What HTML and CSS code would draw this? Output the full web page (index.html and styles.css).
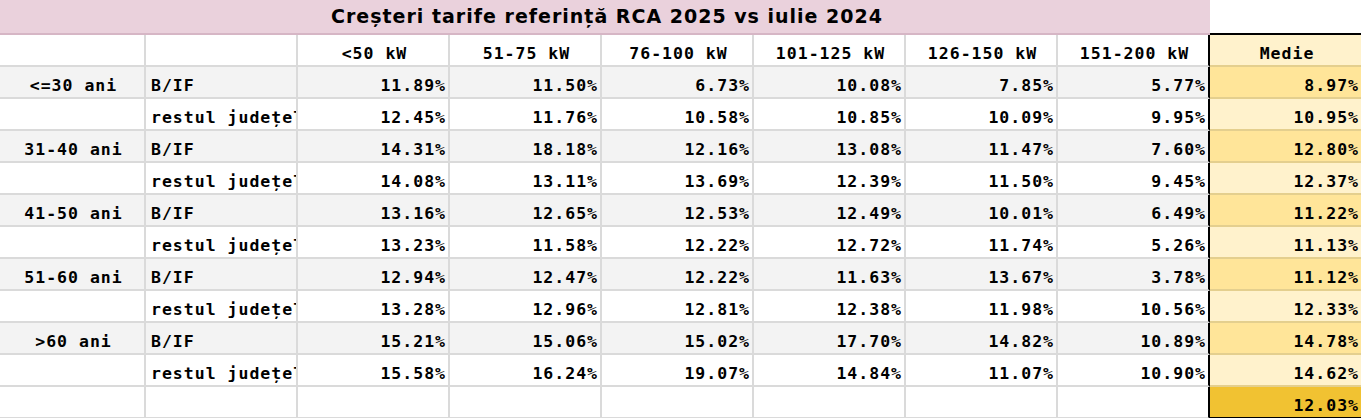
FILE: index.html
```html
<!DOCTYPE html>
<html lang="ro">
<head>
<meta charset="utf-8">
<title>Creșteri tarife referință RCA 2025 vs iulie 2024</title>
<link rel="stylesheet" href="styles.css">
</head>
<body>
<div class="sheet">
  <div class="title">Creșteri tarife referință RCA 2025 vs iulie 2024</div>
  <div class="blank-top"></div>

  <div class="c hd"></div><div class="c hd"></div>
  <div class="c hd ctr">&lt;50 kW</div><div class="c hd ctr">51-75 kW</div><div class="c hd ctr">76-100 kW</div>
  <div class="c hd ctr">101-125 kW</div><div class="c hd ctr">126-150 kW</div><div class="c hd ctr last">151-200 kW</div>
  <div class="c m m-light ctr">Medie</div>

  <div class="c g ctr">&lt;=30 ani</div><div class="c g lbl">B/IF</div>
  <div class="c g num">11.89%</div><div class="c g num">11.50%</div><div class="c g num">6.73%</div><div class="c g num">10.08%</div><div class="c g num">7.85%</div><div class="c g num last">5.77%</div>
  <div class="c m m-mid num">8.97%</div>
  <div class="c"></div><div class="c lbl">restul județelor</div>
  <div class="c num">12.45%</div><div class="c num">11.76%</div><div class="c num">10.58%</div><div class="c num">10.85%</div><div class="c num">10.09%</div><div class="c num last">9.95%</div>
  <div class="c m m-light num">10.95%</div>

  <div class="c g ctr">31-40 ani</div><div class="c g lbl">B/IF</div>
  <div class="c g num">14.31%</div><div class="c g num">18.18%</div><div class="c g num">12.16%</div><div class="c g num">13.08%</div><div class="c g num">11.47%</div><div class="c g num last">7.60%</div>
  <div class="c m m-mid num">12.80%</div>
  <div class="c"></div><div class="c lbl">restul județelor</div>
  <div class="c num">14.08%</div><div class="c num">13.11%</div><div class="c num">13.69%</div><div class="c num">12.39%</div><div class="c num">11.50%</div><div class="c num last">9.45%</div>
  <div class="c m m-light num">12.37%</div>

  <div class="c g ctr">41-50 ani</div><div class="c g lbl">B/IF</div>
  <div class="c g num">13.16%</div><div class="c g num">12.65%</div><div class="c g num">12.53%</div><div class="c g num">12.49%</div><div class="c g num">10.01%</div><div class="c g num last">6.49%</div>
  <div class="c m m-mid num">11.22%</div>
  <div class="c"></div><div class="c lbl">restul județelor</div>
  <div class="c num">13.23%</div><div class="c num">11.58%</div><div class="c num">12.22%</div><div class="c num">12.72%</div><div class="c num">11.74%</div><div class="c num last">5.26%</div>
  <div class="c m m-light num">11.13%</div>

  <div class="c g ctr">51-60 ani</div><div class="c g lbl">B/IF</div>
  <div class="c g num">12.94%</div><div class="c g num">12.47%</div><div class="c g num">12.22%</div><div class="c g num">11.63%</div><div class="c g num">13.67%</div><div class="c g num last">3.78%</div>
  <div class="c m m-mid num">11.12%</div>
  <div class="c"></div><div class="c lbl">restul județelor</div>
  <div class="c num">13.28%</div><div class="c num">12.96%</div><div class="c num">12.81%</div><div class="c num">12.38%</div><div class="c num">11.98%</div><div class="c num last">10.56%</div>
  <div class="c m m-light num">12.33%</div>

  <div class="c g ctr">&gt;60 ani</div><div class="c g lbl">B/IF</div>
  <div class="c g num">15.21%</div><div class="c g num">15.06%</div><div class="c g num">15.02%</div><div class="c g num">17.70%</div><div class="c g num">14.82%</div><div class="c g num last">10.89%</div>
  <div class="c m m-mid num">14.78%</div>
  <div class="c"></div><div class="c lbl">restul județelor</div>
  <div class="c num">15.58%</div><div class="c num">16.24%</div><div class="c num">19.07%</div><div class="c num">14.84%</div><div class="c num">11.07%</div><div class="c num last">10.90%</div>
  <div class="c m m-light num">14.62%</div>

  <div class="c"></div><div class="c"></div><div class="c"></div><div class="c"></div><div class="c"></div><div class="c"></div><div class="c"></div><div class="c last"></div>
  <div class="c m m-dark m-end num">12.03%</div>
</div>
</body>
</html>
```
FILE: styles.css
```css
* { box-sizing: border-box; }
html, body { margin: 0; padding: 0; background: #fff; }
body { overflow: hidden; }

.sheet {
  display: grid;
  grid-template-columns: 146px repeat(7, 152px) 151px;
  grid-template-rows: 35px;
  grid-auto-rows: 32px;
  width: 1361px;
  font-family: "DejaVu Sans Mono", "Liberation Mono", monospace;
  font-size: 16.5px;
  font-weight: bold;
  letter-spacing: 1px;
  color: #000;
}

.title {
  grid-column: 1 / span 8;
  background: #ead1dc;
  border-bottom: 2px solid #d6b6c5;
  font-family: "DejaVu Sans", "Open Sans", sans-serif;
  font-weight: bold;
  font-size: 19px;
  letter-spacing: 1px;
  line-height: 32px;
  text-align: center;
  padding-left: 4px;
}
.blank-top {
  background: #fff;
  border-bottom: 2px solid #000;
}

.c {
  display: flex;
  align-items: flex-end;
  padding: 0 3px 2px 5px;
  line-height: 18px;
  border-right: 2px solid #dadada;
  border-bottom: 2px solid #dadada;
  background: #fff;
  white-space: nowrap;
  overflow: hidden;
}
.g { background: #f3f3f3; }
.ctr { justify-content: center; padding-left: 3px; padding-right: 0; }
.num { justify-content: flex-end; padding-right: 2px; }
.lbl { justify-content: flex-start; padding-left: 5px; }
.last { border-right-color: #000; }

.m { border-right: none; border-bottom-color: #e4cf8e; }
.m-light { background: #fff2cc; }
.m-mid { background: #ffe599; }
.m-dark { background: #f1c232; }
.m-end { border-bottom: 2px solid #000; }
```
